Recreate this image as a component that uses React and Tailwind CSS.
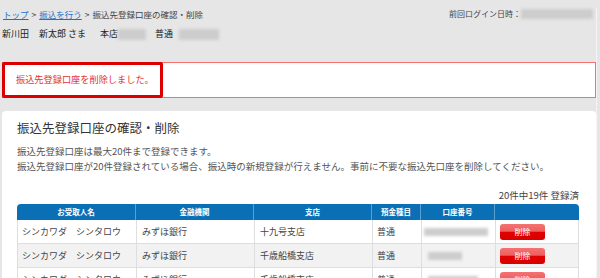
import React from 'react'

const Blur = ({ className }) => (
  <span className={`inline-block bg-[#cdcdcd] blur-[1.5px] ${className}`}></span>
)

const rows = [
  { name: 'シンカワダ　シンタロウ', bank: 'みずほ銀行', branch: '十九号支店', type: '普通', acc: 'w-[64px] ml-[2px]' },
  { name: 'シンカワダ　シンタロウ', bank: 'みずほ銀行', branch: '千歳船橋支店', type: '普通', acc: 'w-[34px] ml-[6px]' },
  { name: 'シンカワダ　シンタロウ', bank: 'みずほ銀行', branch: '千歳船橋支店', type: '普通', acc: 'w-[50px] ml-[6px]' },
]

const cols = 'grid grid-cols-[118px_118px_118px_49px_74px_85px]'

export default function App() {
  return (
    <div className="w-[600px] h-[278px] overflow-hidden bg-[#e6e6e6] text-[#333] font-['Meiryo','Noto_Sans_CJK_JP',sans-serif]">
      <div className="w-[597px] h-full border-r border-[#f4f4f4]">
        {/* breadcrumb */}
        <div className="mt-[8px] h-[12px] pl-[3px] pr-[3px] flex items-center justify-between text-[8.5px] leading-[12px] text-[#444]">
          <div className="flex items-center gap-[3px]">
            <span className="text-[#1a73c8] underline">トップ</span>
            <span>&gt;</span>
            <span className="text-[#1a73c8] underline">振込を行う</span>
            <span>&gt;</span>
            <span>振込先登録口座の確認・削除</span>
          </div>
          <div className="flex items-center text-[8px]">
            <span>前回ログイン日時：</span>
            <Blur className="w-[72px] h-[10px]" />
          </div>
        </div>

        {/* customer line */}
        <div className="mt-[8px] h-[12px] pl-[2px] flex items-center text-[9px] leading-[12px] text-[#222]">
          <span>新川田</span>
          <span className="ml-[10px]">新太郎 さま</span>
          <span className="ml-[14px]">本店</span>
          <Blur className="w-[28px] h-[11px]" />
          <span className="ml-[9px]">普通</span>
          <Blur className="ml-[6px] w-[40px] h-[11px]" />
        </div>

        {/* alert */}
        <div className="relative mt-[22px] ml-[2px] w-[594px] h-[36px] bg-white border border-[#f56f6f] flex items-center pl-[13px]">
          <span className="text-[9.2px] text-[#e63232]">振込先登録口座を削除しました。</span>
          <div className="absolute -left-[1px] -top-[1px] w-[161px] h-[36px] border-[3px] border-[#dd0000] rounded-[2px]"></div>
        </div>

        {/* card */}
        <div className="mt-[13px] ml-[2px] w-[594px] h-[200px] bg-white rounded-[4px] pl-[15px] pt-[9px]">
          <h2 className="text-[12.5px] leading-[16px] text-[#333]">振込先登録口座の確認・削除</h2>
          <div className="mt-[8px] text-[9.5px] leading-[15px] text-[#555]">
            <p>振込先登録口座は最大20件まで登録できます。</p>
            <p>振込先登録口座が20件登録されている場合、振込時の新規登録が行えません。事前に不要な振込先口座を削除してください。</p>
          </div>
          <div className="mt-[15px] w-[562px] text-right text-[9.5px] leading-[12px] text-[#444]">20件中19件 登録済</div>

          <div className="mt-[3px] w-[562px]">
            <div className={`${cols} h-[16px] bg-[#0a6fb5] rounded-t-[4px] text-white text-[7.5px] font-bold`}>
              {['お受取人名', '金融機関', '支店', '預金種目', '口座番号', ''].map((h, i) => (
                <div key={i} className={`flex items-center justify-center ${i > 0 ? 'border-l border-[#5a9fd2]' : ''}`}>{h}</div>
              ))}
            </div>
            {rows.map((r, i) => (
              <div key={i} className={`${cols} h-[24px] border-x border-b border-[#dedede] text-[9px] text-[#444] ${i % 2 === 1 ? 'bg-[#f2f2f2]' : 'bg-white'}`}>
                <div className="flex items-center pl-[4px]">{r.name}</div>
                <div className="flex items-center pl-[5px] border-l border-[#dedede]">{r.bank}</div>
                <div className="flex items-center pl-[5px] border-l border-[#dedede]">{r.branch}</div>
                <div className="flex items-center pl-[4px] border-l border-[#dedede]">{r.type}</div>
                <div className="flex items-center border-l border-[#dedede]">
                  <Blur className={`${r.acc} h-[8px]`} />
                </div>
                <div className="flex items-center pl-[4px] border-l border-[#dedede]">
                  <button className="w-[45px] h-[16px] rounded-[3px] bg-[linear-gradient(#f47272_0%,#ef5e5e_45%,#e20000_52%,#d80000_100%)] text-white text-[8px] leading-[16px]">削除</button>
                </div>
              </div>
            ))}
          </div>
        </div>
      </div>
    </div>
  )
}
